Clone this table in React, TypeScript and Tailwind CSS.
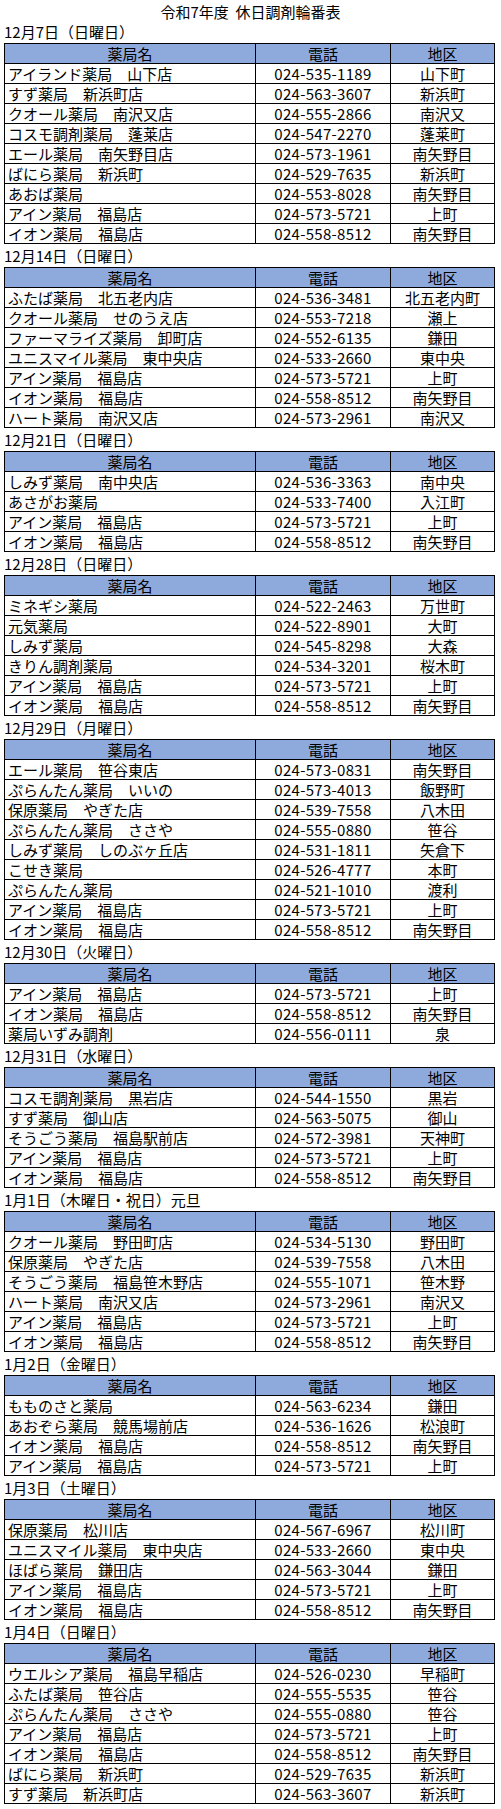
import React from "react";

type Row = [string, string, string];
type Section = { label: string; rows: Row[] };

const A: Row = ["アイン薬局　福島店", "024-573-5721", "上町"];
const I: Row = ["イオン薬局　福島店", "024-558-8512", "南矢野目"];

const sections: Section[] = [
  {
    label: "12月7日（日曜日）",
    rows: [
      ["アイランド薬局　山下店", "024-535-1189", "山下町"],
      ["すず薬局　新浜町店", "024-563-3607", "新浜町"],
      ["クオール薬局　南沢又店", "024-555-2866", "南沢又"],
      ["コスモ調剤薬局　蓬莱店", "024-547-2270", "蓬莱町"],
      ["エール薬局　南矢野目店", "024-573-1961", "南矢野目"],
      ["ばにら薬局　新浜町", "024-529-7635", "新浜町"],
      ["あおば薬局", "024-553-8028", "南矢野目"],
      A,
      I,
    ],
  },
  {
    label: "12月14日（日曜日）",
    rows: [
      ["ふたば薬局　北五老内店", "024-536-3481", "北五老内町"],
      ["クオール薬局　せのうえ店", "024-553-7218", "瀬上"],
      ["ファーマライズ薬局　卸町店", "024-552-6135", "鎌田"],
      ["ユニスマイル薬局　東中央店", "024-533-2660", "東中央"],
      A,
      I,
      ["ハート薬局　南沢又店", "024-573-2961", "南沢又"],
    ],
  },
  {
    label: "12月21日（日曜日）",
    rows: [
      ["しみず薬局　南中央店", "024-536-3363", "南中央"],
      ["あさがお薬局", "024-533-7400", "入江町"],
      A,
      I,
    ],
  },
  {
    label: "12月28日（日曜日）",
    rows: [
      ["ミネギシ薬局", "024-522-2463", "万世町"],
      ["元気薬局", "024-522-8901", "大町"],
      ["しみず薬局", "024-545-8298", "大森"],
      ["きりん調剤薬局", "024-534-3201", "桜木町"],
      A,
      I,
    ],
  },
  {
    label: "12月29日（月曜日）",
    rows: [
      ["エール薬局　笹谷東店", "024-573-0831", "南矢野目"],
      ["ぷらんたん薬局　いいの", "024-573-4013", "飯野町"],
      ["保原薬局　やぎた店", "024-539-7558", "八木田"],
      ["ぷらんたん薬局　ささや", "024-555-0880", "笹谷"],
      ["しみず薬局　しのぶヶ丘店", "024-531-1811", "矢倉下"],
      ["こせき薬局", "024-526-4777", "本町"],
      ["ぷらんたん薬局", "024-521-1010", "渡利"],
      A,
      I,
    ],
  },
  {
    label: "12月30日（火曜日）",
    rows: [A, I, ["薬局いずみ調剤", "024-556-0111", "泉"]],
  },
  {
    label: "12月31日（水曜日）",
    rows: [
      ["コスモ調剤薬局　黒岩店", "024-544-1550", "黒岩"],
      ["すず薬局　御山店", "024-563-5075", "御山"],
      ["そうごう薬局　福島駅前店", "024-572-3981", "天神町"],
      A,
      I,
    ],
  },
  {
    label: "1月1日（木曜日・祝日）元旦",
    rows: [
      ["クオール薬局　野田町店", "024-534-5130", "野田町"],
      ["保原薬局　やぎた店", "024-539-7558", "八木田"],
      ["そうごう薬局　福島笹木野店", "024-555-1071", "笹木野"],
      ["ハート薬局　南沢又店", "024-573-2961", "南沢又"],
      A,
      I,
    ],
  },
  {
    label: "1月2日（金曜日）",
    rows: [
      ["もものさと薬局", "024-563-6234", "鎌田"],
      ["あおぞら薬局　競馬場前店", "024-536-1626", "松浪町"],
      I,
      A,
    ],
  },
  {
    label: "1月3日（土曜日）",
    rows: [
      ["保原薬局　松川店", "024-567-6967", "松川町"],
      ["ユニスマイル薬局　東中央店", "024-533-2660", "東中央"],
      ["ほばら薬局　鎌田店", "024-563-3044", "鎌田"],
      A,
      I,
    ],
  },
  {
    label: "1月4日（日曜日）",
    rows: [
      ["ウエルシア薬局　福島早稲店", "024-526-0230", "早稲町"],
      ["ふたば薬局　笹谷店", "024-555-5535", "笹谷"],
      ["ぷらんたん薬局　ささや", "024-555-0880", "笹谷"],
      A,
      I,
      ["ばにら薬局　新浜町", "024-529-7635", "新浜町"],
      ["すず薬局　新浜町店", "024-563-3607", "新浜町"],
    ],
  },
];

function Table({ section }: { section: Section }) {
  return (
    <div>
      <div className="h-[23px] flex items-end pl-[4px] text-[15px] leading-[20px] pb-[1px]">
        {section.label}
      </div>
      <div className="ml-[4px] w-[491px] border-l border-t border-black">
        <div className="grid grid-cols-[251px_135px_104px] bg-[#8EA9DB] text-[15px] leading-[19px]">
          <div className="h-[20px] border-r border-b border-black text-center">薬局名</div>
          <div className="h-[20px] border-r border-b border-black text-center">電話</div>
          <div className="h-[20px] border-r border-b border-black text-center">地区</div>
        </div>
        {section.rows.map((r, i) => (
          <div key={i} className="grid grid-cols-[251px_135px_104px] text-[15px] leading-[20px]">
            <div className="h-[20px] border-r border-b border-black pl-[3px] whitespace-nowrap overflow-hidden">
              {r[0]}
            </div>
            <div className="h-[20px] border-r border-b border-black text-center tracking-[0.3px] whitespace-nowrap">
              {r[1]}
            </div>
            <div className="h-[20px] border-r border-b border-black text-center whitespace-nowrap">
              {r[2]}
            </div>
          </div>
        ))}
      </div>
    </div>
  );
}

export default function App() {
  return (
    <div className="w-[501px] bg-white text-black font-['Noto_Sans_CJK_JP','Noto_Sans',sans-serif]">
      <div className="h-[20px] pt-[4px] text-center text-[15px] leading-[16px]">
        令和7年度&nbsp;&nbsp;休日調剤輪番表
      </div>
      {sections.map((s, i) => (
        <Table key={i} section={s} />
      ))}
    </div>
  );
}
